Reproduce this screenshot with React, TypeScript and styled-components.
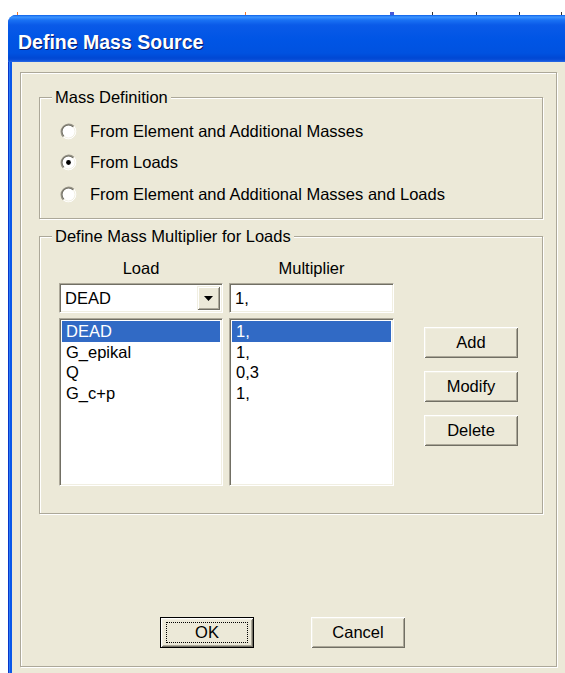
import React from "react";
import styled, { createGlobalStyle, css } from "styled-components";

const FACE = "#ECE9D8";
const SHADOW = "#ACA899";
const DARK_SHADOW = "#716F64";
const LIGHT = "#F1EFE2";

const GlobalStyle = createGlobalStyle`
  html, body {
    margin: 0;
    padding: 0;
    background: #fff;
    overflow: hidden;
  }
  body {
    font-family: "Liberation Sans", Arial, sans-serif;
    color: #000;
  }
`;

const Screen = styled.div`
  width: 565px;
  height: 673px;
  overflow: hidden;
  background: #fff;
  display: flex;
  flex-direction: column;
`;

// bits of the desktop peeking out above the dialog
const BackdropStrip = styled.div`
  position: relative;
  flex: none;
  height: 15px;
`;

const Tick = styled.span<{ $x: number; $color: string; $w?: number }>`
  position: absolute;
  bottom: 0;
  left: ${({ $x }) => $x}px;
  width: ${({ $w }) => $w ?? 1}px;
  height: 3px;
  background: ${({ $color }) => $color};
`;

const Window = styled.div`
  flex: 1;
  min-height: 0;
  margin-left: 8px;
  display: flex;
  flex-direction: column;
  border-top-left-radius: 8px;
  overflow: hidden;
  background: linear-gradient(90deg, #0736c8 0 1px, #2a78f6 1px 2px, #0a58ea 2px);
`;

const TitleBar = styled.div`
  flex: none;
  height: 47px;
  box-sizing: border-box;
  padding: 7px 0 0 10px;
  display: flex;
  align-items: center;
  background: linear-gradient(
    180deg,
    #0a5fe8 0px,
    #3d95ff 2px,
    #1a72f4 5px,
    #0a5ae8 10px,
    #0055e5 24px,
    #0052e0 38px,
    #0048d4 43px,
    #0a4fd8 45px,
    #2a6ae6 47px
  );
`;

const TitleText = styled.span`
  font-family: "Liberation Sans", Arial, sans-serif;
  font-weight: bold;
  font-size: 19.5px;
  line-height: 22px;
  color: #fff;
  text-shadow: 1px 1px 0 #0a1a6a;
`;

const Body = styled.div`
  flex: 1;
  min-height: 0;
  margin-left: 4px;
  padding: 10px 8px 6px 8px;
  background: ${FACE};
  display: flex;
  flex-direction: column;
`;

const Panel = styled.div`
  flex: none;
  height: 595px;
  box-sizing: border-box;
  border: 1px solid ${SHADOW};
  box-shadow: 1px 1px 0 #fff, inset 1px 1px 0 #fff;
  padding: 24px 13px 0 18px;
  display: flex;
  flex-direction: column;
`;

const GroupBox = styled.div<{ $height: number; $gap?: number }>`
  position: relative;
  box-sizing: border-box;
  height: ${({ $height }) => $height}px;
  margin-top: ${({ $gap }) => $gap ?? 0}px;
  border: 1px solid ${SHADOW};
  box-shadow: 1px 1px 0 #fff, inset 1px 1px 0 #fff;
`;

const Caption = styled.span`
  position: absolute;
  top: -10px;
  left: 12px;
  padding: 0 3px;
  background: ${FACE};
  font-size: 16.5px;
  line-height: 19px;
  white-space: nowrap;
`;

const RadioList = styled.div`
  padding: 17.25px 0 0 20px;
  display: flex;
  flex-direction: column;
`;

const RadioRow = styled.label`
  height: 31.5px;
  display: flex;
  align-items: center;
  gap: 13px;
  font-size: 16.5px;
  white-space: nowrap;
`;

const LoadsGrid = styled.div`
  padding: 21px 0 0 19px;
  display: grid;
  grid-template-columns: 164px 165px auto;
  grid-template-rows: 20px 30px 168px;
  column-gap: 6px;
  row-gap: 5px;
  align-items: start;
`;

const ColumnHeader = styled.div`
  font-size: 16.5px;
  line-height: 20px;
  text-align: center;
`;

const sunken = css`
  box-sizing: border-box;
  background: #fff;
  border: 1px solid;
  border-color: ${SHADOW} #fff #fff ${SHADOW};
  box-shadow: inset 1px 1px 0 ${DARK_SHADOW}, inset -1px -1px 0 ${LIGHT};
`;

const ComboBox = styled.div`
  ${sunken};
  height: 30px;
  padding: 2px 2px 2px 5px;
  display: flex;
  align-items: stretch;
  font-size: 16.5px;
`;

const ComboValue = styled.span`
  flex: 1;
  display: flex;
  align-items: center;
`;

const DropButton = styled.span`
  width: 23px;
  display: flex;
  align-items: center;
  justify-content: center;
  background: ${FACE};
  box-shadow: inset 1px 1px 0 ${LIGHT}, inset -1px -1px 0 ${DARK_SHADOW},
    inset 2px 2px 0 #fff, inset -2px -2px 0 ${SHADOW};
`;

const TextBox = styled.div`
  ${sunken};
  height: 30px;
  padding: 0 5px;
  display: flex;
  align-items: center;
  font-size: 16.5px;
`;

const ListBox = styled.div`
  ${sunken};
  height: 168px;
  padding: 2px;
  display: flex;
  flex-direction: column;
`;

const ListItem = styled.div<{ $selected?: boolean }>`
  height: 20.5px;
  line-height: 20.5px;
  padding-left: 4px;
  font-size: 16.5px;
  white-space: nowrap;
  ${({ $selected }) =>
    $selected &&
    css`
      background: #316ac5;
      color: #fff;
    `}
`;

const ButtonStack = styled.div`
  margin: 9px 0 0 24px;
  display: flex;
  flex-direction: column;
  gap: 13px;
`;

const Button = styled.button<{ $default?: boolean }>`
  width: 94px;
  height: 31px;
  box-sizing: border-box;
  margin: 0;
  padding: 0;
  border: none;
  background: ${FACE};
  font-family: "Liberation Sans", Arial, sans-serif;
  font-size: 16.5px;
  color: #000;
  display: flex;
  align-items: center;
  justify-content: center;
  box-shadow: inset 1px 1px 0 #fff, inset -1px -1px 0 ${DARK_SHADOW},
    inset 2px 2px 0 ${LIGHT}, inset -2px -2px 0 ${SHADOW};
  ${({ $default }) =>
    $default &&
    css`
      border: 1px solid #000;
      padding: 4px 5px;
      align-items: stretch;
    `}
`;

const FocusRing = styled.span`
  flex: 1;
  display: flex;
  align-items: center;
  justify-content: center;
  border: 1px dotted #000;
`;

const Footer = styled.div`
  margin-top: 103px;
  padding-left: 121px;
  display: flex;
  gap: 57px;
`;

function RadioMark({ checked }: { checked?: boolean }) {
  return (
    <svg width="17" height="17" viewBox="0 0 17 17">
      <circle cx="8.5" cy="8.5" r="7.5" fill="#fff" />
      <path d="M3.2 13.8 A7.5 7.5 0 0 0 13.8 3.2" fill="none" stroke="#fff" strokeWidth="1" />
      <path d="M3.9 13.1 A6.5 6.5 0 0 0 13.1 3.9" fill="none" stroke={LIGHT} strokeWidth="1" />
      <path d="M3.2 13.8 A7.5 7.5 0 0 1 13.8 3.2" fill="none" stroke="#9c998c" strokeWidth="1.4" />
      <path d="M3.9 13.1 A6.5 6.5 0 0 1 13.1 3.9" fill="none" stroke={DARK_SHADOW} strokeWidth="1.1" />
      {checked && <circle cx="8.5" cy="8.5" r="2.4" fill="#000" />}
    </svg>
  );
}

function DownArrow() {
  return (
    <svg width="9" height="5" viewBox="0 0 9 5">
      <polygon points="0,0 9,0 4.5,5" fill="#000" />
    </svg>
  );
}

const massOptions = [
  { label: "From Element and Additional Masses", checked: false },
  { label: "From Loads", checked: true },
  { label: "From Element and Additional Masses and Loads", checked: false },
];

const loads = [
  { name: "DEAD", factor: "1," },
  { name: "G_epikal", factor: "1," },
  { name: "Q", factor: "0,3" },
  { name: "G_c+p", factor: "1," },
];

export default function App() {
  return (
    <Screen>
      <GlobalStyle />
      <BackdropStrip>
        <Tick $x={17} $color="#f07830" />
        <Tick $x={245} $color="#f07830" />
        <Tick $x={390} $color="#4a5ad8" $w={4} />
        <Tick $x={432} $color="#333" />
        <Tick $x={476} $color="#333" />
        <Tick $x={519} $color="#333" />
        <Tick $x={561} $color="#333" />
      </BackdropStrip>
      <Window>
        <TitleBar>
          <TitleText>Define Mass Source</TitleText>
        </TitleBar>
        <Body>
          <Panel>
            <GroupBox $height={122}>
              <Caption>Mass Definition</Caption>
              <RadioList>
                {massOptions.map((opt) => (
                  <RadioRow key={opt.label}>
                    <RadioMark checked={opt.checked} />
                    {opt.label}
                  </RadioRow>
                ))}
              </RadioList>
            </GroupBox>

            <GroupBox $height={278} $gap={17}>
              <Caption>Define Mass Multiplier for Loads</Caption>
              <LoadsGrid>
                <ColumnHeader>Load</ColumnHeader>
                <ColumnHeader>Multiplier</ColumnHeader>
                <span />
                <ComboBox>
                  <ComboValue>DEAD</ComboValue>
                  <DropButton>
                    <DownArrow />
                  </DropButton>
                </ComboBox>
                <TextBox>1,</TextBox>
                <span />
                <ListBox>
                  {loads.map((l, i) => (
                    <ListItem key={l.name} $selected={i === 0}>
                      {l.name}
                    </ListItem>
                  ))}
                </ListBox>
                <ListBox>
                  {loads.map((l, i) => (
                    <ListItem key={l.name} $selected={i === 0}>
                      {l.factor}
                    </ListItem>
                  ))}
                </ListBox>
                <ButtonStack>
                  <Button>Add</Button>
                  <Button>Modify</Button>
                  <Button>Delete</Button>
                </ButtonStack>
              </LoadsGrid>
            </GroupBox>

            <Footer>
              <Button $default>
                <FocusRing>OK</FocusRing>
              </Button>
              <Button>Cancel</Button>
            </Footer>
          </Panel>
        </Body>
      </Window>
    </Screen>
  );
}
